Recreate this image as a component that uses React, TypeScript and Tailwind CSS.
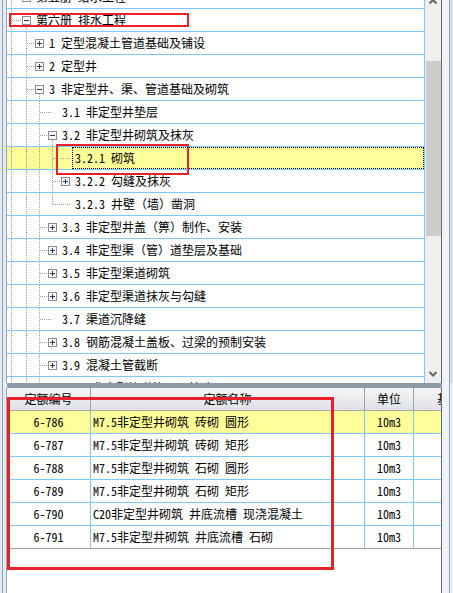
import React from "react";

type TreeNode = {
  level: number;
  exp?: "plus" | "minus";
  text: string;
  selected?: boolean;
  last?: boolean;
};

// x positions of the connector lines for each tree level
const V = [11, 26, 39, 52];

const TREE: TreeNode[] = [
  { level: 0, exp: "plus", text: "第五册 给水工程" },
  { level: 0, exp: "minus", text: "第六册 排水工程" },
  { level: 1, exp: "plus", text: "1 定型混凝土管道基础及铺设" },
  { level: 1, exp: "plus", text: "2 定型井" },
  { level: 1, exp: "minus", text: "3 非定型井、渠、管道基础及砌筑" },
  { level: 2, text: "3.1 非定型井垫层" },
  { level: 2, exp: "minus", text: "3.2 非定型井砌筑及抹灰" },
  { level: 3, text: "3.2.1 砌筑", selected: true },
  { level: 3, exp: "plus", text: "3.2.2 勾缝及抹灰" },
  { level: 3, text: "3.2.3 井壁（墙）凿洞", last: true },
  { level: 2, exp: "plus", text: "3.3 非定型井盖（箅）制作、安装" },
  { level: 2, exp: "plus", text: "3.4 非定型渠（管）道垫层及基础" },
  { level: 2, exp: "plus", text: "3.5 非定型渠道砌筑" },
  { level: 2, exp: "plus", text: "3.6 非定型渠道抹灰与勾缝" },
  { level: 2, text: "3.7 渠道沉降缝" },
  { level: 2, exp: "plus", text: "3.8 钢筋混凝土盖板、过梁的预制安装" },
  { level: 2, exp: "plus", text: "3.9 混凝土管截断" },
  { level: 2, exp: "plus", text: "3.10 非定型管道垫层及基础" },
];

const ROWS = [
  { code: "6-786", name: "M7.5非定型井砌筑 砖砌 圆形", unit: "10m3" },
  { code: "6-787", name: "M7.5非定型井砌筑 砖砌 矩形", unit: "10m3" },
  { code: "6-788", name: "M7.5非定型井砌筑 石砌 圆形", unit: "10m3" },
  { code: "6-789", name: "M7.5非定型井砌筑 石砌 矩形", unit: "10m3" },
  { code: "6-790", name: "C20非定型井砌筑 井底流槽 现浇混凝土", unit: "10m3" },
  { code: "6-791", name: "M7.5非定型井砌筑 井底流槽 石砌", unit: "10m3" },
];

function Connectors({ n, width }: { n: TreeNode; width: number }) {
  const L = n.level;
  const boxL = 22 + 13 * L;
  const hEnd = n.exp ? boxL : L === 3 ? 70 : 52 + 13 * (L - 2);
  const dot = { stroke: "#a0a0a0", strokeWidth: 1, strokeDasharray: "1 1" };

  return (
    <svg width={width} height={22} viewBox={`7 0 ${width} 22`} shapeRendering="crispEdges" className="shrink-0">
      {V.slice(0, L).map((x) => (
        <line key={x} x1={x + 0.5} y1={0} x2={x + 0.5} y2={22} {...dot} />
      ))}
      <line x1={V[L] + 0.5} y1={0} x2={V[L] + 0.5} y2={n.last ? 12 : 22} {...dot} />
      <line x1={V[L] + 1} y1={11.5} x2={hEnd} y2={11.5} {...dot} />
      {n.exp === "minus" && (
        <line x1={V[L + 1] + 0.5} y1={16} x2={V[L + 1] + 0.5} y2={22} {...dot} />
      )}
      {n.exp && (
        <g>
          <rect x={boxL + 0.5} y={7.5} width={8} height={8} fill="#fbfbfb" stroke="#8c8d8e" />
          <line x1={boxL + 2} y1={11.5} x2={boxL + 7} y2={11.5} stroke="#1f3c73" />
          {n.exp === "plus" && (
            <line x1={boxL + 4.5} y1={9} x2={boxL + 4.5} y2={14} stroke="#1f3c73" />
          )}
        </g>
      )}
    </svg>
  );
}

function TreeRow({ n }: { n: TreeNode }) {
  const textX = n.selected ? 72 : 36 + 13 * n.level;
  return (
    <div
      className={`flex h-[23px] shrink-0 items-stretch border-b border-[#80c8f8] ${
        n.selected ? "bg-[#ffff99]" : "bg-white"
      }`}
    >
      <Connectors n={n} width={textX - 7} />
      {n.selected ? (
        <div className="flex flex-1 items-center border border-dotted border-black pl-[2px]">
          <span className="whitespace-pre">{n.text}</span>
        </div>
      ) : (
        <div className="flex flex-1 items-center">
          <span className="whitespace-pre">{n.text}</span>
        </div>
      )}
    </div>
  );
}

function LeftGutter() {
  return (
    <div className="flex w-[7px] shrink-0 bg-[#e3eaf3]">
      <div className="ml-[2px] w-px bg-[#8ea0b5]" />
      <div className="ml-[3px] w-px bg-[#a3a3a3]" />
    </div>
  );
}

function RightStrip({ top }: { top?: boolean }) {
  return (
    <div className="flex w-[11px] shrink-0 bg-[#eef3f9]">
      <div className="ml-[7px] w-px bg-[#95a3b3]" />
      <div className={`flex-1 ${top ? "bg-[#d9dee4]" : "bg-[#e8edf3]"}`} />
    </div>
  );
}

export default function App() {
  return (
    <div className="relative flex h-[593px] w-[453px] flex-col overflow-hidden bg-white font-['Noto_Sans_Mono_CJK_SC','Noto_Sans_CJK_SC',sans-serif] text-[12px] leading-none text-black">
      {/* tree pane */}
      <div className="flex h-[383px] shrink-0">
        <LeftGutter />
        <div className="flex w-[418px] shrink-0 flex-col overflow-hidden border-r border-[#80c8f8]">
          <div className="-mt-[14px] flex flex-col">
            {TREE.map((n) => (
              <TreeRow key={n.text} n={n} />
            ))}
          </div>
        </div>
        <div className="flex w-[16px] shrink-0 flex-col bg-[#efefef]">
          <svg width={16} height={4} viewBox="0 0 16 4">
            <polyline points="4.5,3.5 8,0 11.5,3.5" fill="none" stroke="#666" strokeWidth={2} />
          </svg>
          <div className="ml-px mt-[57px] h-[175px] w-[15px] bg-[#cdcdcd]" />
          <div className="flex-1" />
          <svg width={16} height={17} viewBox="0 0 16 17">
            <polyline points="4.5,6 8,9.5 11.5,6" fill="none" stroke="#666" strokeWidth={2} />
          </svg>
        </div>
        <div className="w-px shrink-0 bg-[#696969]" />
        <RightStrip top />
      </div>

      {/* splitter */}
      <div className="flex h-[5px] shrink-0">
        <div className="flex w-[7px] shrink-0 bg-[#e3eaf3]">
          <div className="ml-[2px] w-px bg-[#8ea0b5]" />
        </div>
        <div className="flex-1 bg-[#8f9aa7]" />
        <RightStrip />
      </div>

      {/* list pane */}
      <div className="flex flex-1">
        <LeftGutter />
        <div className="flex w-[434px] shrink-0 flex-col">
          <div className="grid h-[23px] shrink-0 grid-cols-[84px_274px_49px_27px] border-b border-[#a9a9a9] bg-gradient-to-b from-[#f5f6f7] to-[#dfe2e6]">
            <div className="flex items-center justify-center border-r border-[#a0a0a0]">定额编号</div>
            <div className="flex items-center justify-center border-r border-[#a0a0a0]">定额名称</div>
            <div className="flex items-center justify-center border-r border-[#a0a0a0]">单位</div>
            <div className="flex min-w-0 items-center overflow-hidden">
              <span className="ml-[23px] shrink-0 whitespace-nowrap">基价</span>
            </div>
          </div>
          {ROWS.map((r, i) => (
            <div
              key={r.code}
              className={`grid h-[23px] shrink-0 grid-cols-[84px_274px_49px_27px] border-b ${
                i === ROWS.length - 1 ? "border-[#a3a3a3]" : "border-[#80c8f8]"
              } ${i === 0 ? "bg-[#ffff99]" : "bg-white"}`}
            >
              <div className="flex items-center justify-center border-r border-[#80c8f8]">{r.code}</div>
              <div className="flex items-center whitespace-pre border-r border-[#80c8f8] pl-[2px]">{r.name}</div>
              <div className="flex items-center justify-center border-r border-[#80c8f8]">{r.unit}</div>
              <div />
            </div>
          ))}
          <div className="flex-1 bg-white" />
        </div>
        <div className="w-px shrink-0 bg-[#696969]" />
        <RightStrip />
      </div>

      {/* red annotation boxes */}
      <div className="pointer-events-none absolute left-[9px] top-[13px] h-[14px] w-[180px] border-2 border-[#e8202a]" />
      <div className="pointer-events-none absolute left-[56px] top-[144px] h-[31px] w-[133px] border-2 border-[#e8202a]" />
      <div className="pointer-events-none absolute left-[7px] top-[397px] h-[173px] w-[327px] border-[3px] border-[#e8202a]" />
    </div>
  );
}
